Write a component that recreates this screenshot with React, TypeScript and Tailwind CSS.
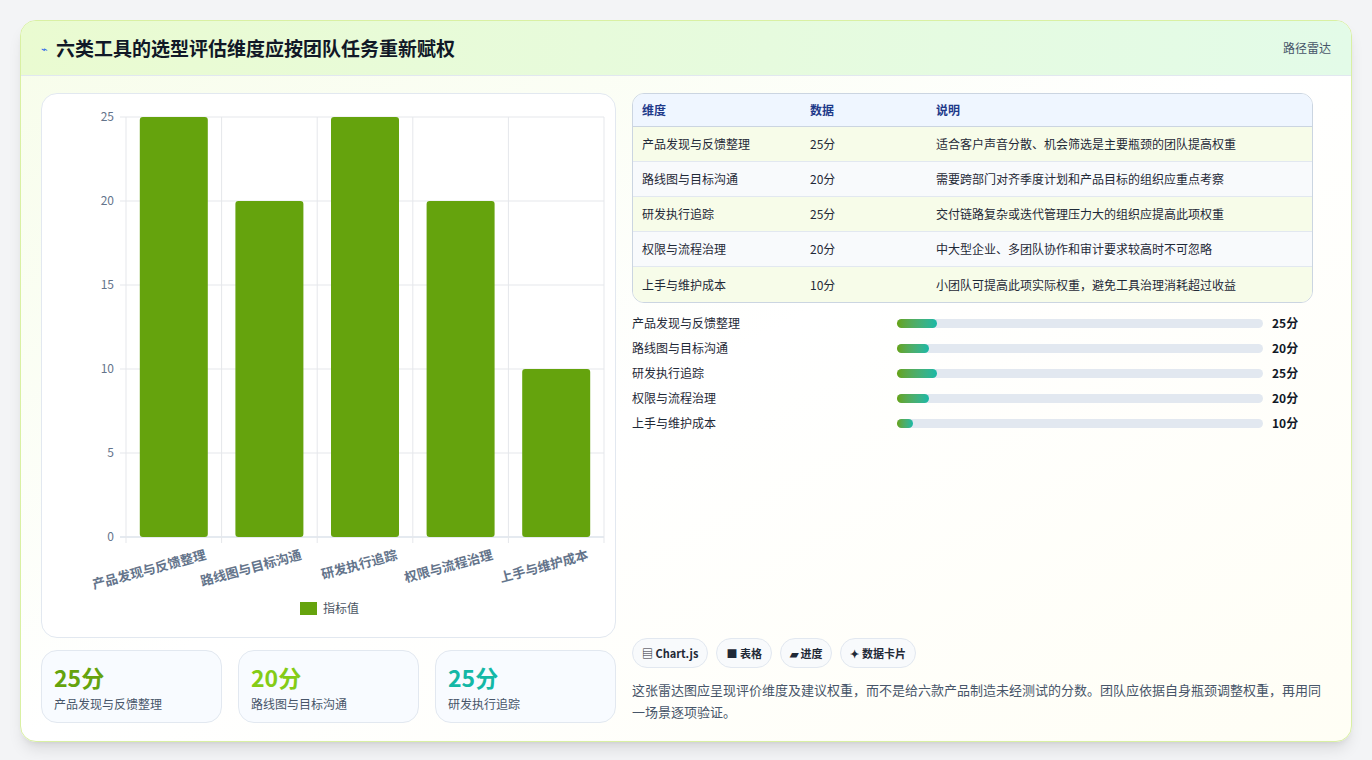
const FONT = { fontFamily: '"Noto Sans CJK SC", "Noto Sans", sans-serif' };

const rows = [
  { name: "产品发现与反馈整理", v: 25, note: "适合客户声音分散、机会筛选是主要瓶颈的团队提高权重" },
  { name: "路线图与目标沟通", v: 20, note: "需要跨部门对齐季度计划和产品目标的组织应重点考察" },
  { name: "研发执行追踪", v: 25, note: "交付链路复杂或迭代管理压力大的组织应提高此项权重" },
  { name: "权限与流程治理", v: 20, note: "中大型企业、多团队协作和审计要求较高时不可忽略" },
  { name: "上手与维护成本", v: 10, note: "小团队可提高此项实际权重，避免工具治理消耗超过收益" },
];

function BarChart() {
  const x0 = 84, x1 = 562, yTop = 23, yBot = 443;
  const step = (x1 - x0) / 5;
  return (
    <svg width="575" height="543" className="block">
      {[0, 5, 10, 15, 20, 25].map((t) => {
        const y = yBot - (t / 25) * (yBot - yTop);
        return (
          <g key={t}>
            <line x1={x0 - 6} x2={x1} y1={y} y2={y} stroke={t === 0 ? "#cbd5e1" : "#e5e7eb"} />
            <text x={x0 - 12} y={y + 4} textAnchor="end" fontSize="12" fill="#64748b">{t}</text>
          </g>
        );
      })}
      {[0, 1, 2, 3, 4, 5].map((i) => (
        <line key={i} x1={x0 + i * step} x2={x0 + i * step} y1={yTop} y2={yBot + 6} stroke="#e5e7eb" />
      ))}
      {rows.map((r, i) => {
        const h = (r.v / 25) * (yBot - yTop);
        const cx = x0 + i * step + step / 2;
        return (
          <g key={r.name}>
            <rect x={cx - 34} y={yBot - h} width="68" height={h} rx="3" fill="#65a30d" />
            <text x={cx + 33} y={yBot + 22} textAnchor="end" fontSize="13" fontWeight="600" fill="#64748b" transform={`rotate(-15 ${cx + 33} ${yBot + 22})`}>{r.name}</text>
          </g>
        );
      })}
      <rect x="258" y="508" width="17" height="13" fill="#65a30d" />
      <text x="281" y="519" fontSize="12" fill="#4b5563">指标值</text>
    </svg>
  );
}

export default function App() {
  return (
    <div style={FONT} className="min-h-[760px] bg-[#f3f4f6] p-5">
      <div className="overflow-hidden rounded-2xl border border-[#d9f0a3] bg-gradient-to-br from-[#f7fdea] via-white to-[#fffef5] shadow-lg">
        <div className="flex h-[55px] items-center justify-between border-b border-[#e2e8f0] bg-gradient-to-r from-[#eafbd1] to-[#e3fbe8] px-5">
          <div className="flex items-center gap-2">
            <span className="text-[11px] text-[#2563eb]">⌁</span>
            <h1 className="text-[19px] font-bold text-[#111827]">六类工具的选型评估维度应按团队任务重新赋权</h1>
          </div>
          <span className="text-[12px] text-[#475569]">路径雷达</span>
        </div>
        <div className="flex gap-4 px-5 pt-[17px] pb-[18px]">
          <div className="flex w-[575px] flex-col gap-3">
            <div className="rounded-2xl border border-[#e2e8f0] bg-white">
              <BarChart />
            </div>
            <div className="grid grid-cols-3 gap-4">
              {[
                ["25分", "产品发现与反馈整理", "text-[#65a30d]"],
                ["20分", "路线图与目标沟通", "text-[#84cc16]"],
                ["25分", "研发执行追踪", "text-[#14b8a6]"],
              ].map(([v, l, c]) => (
                <div key={l} className="h-[73px] rounded-2xl border border-[#e2e8f0] bg-[#f8fbff] px-3 pt-3">
                  <div className={`text-[23px] leading-7 font-bold ${c}`}>{v}</div>
                  <div className="mt-1 text-[12px] text-[#475569]">{l}</div>
                </div>
              ))}
            </div>
          </div>
          <div className="flex flex-1 flex-col">
            <div className="mr-[18px] overflow-hidden rounded-xl border border-[#cbd5e1] text-[12px]">
              <div className="grid h-[33px] grid-cols-[168px_126px_1fr] items-center border-b border-[#cbd5e1] bg-[#eff6ff] px-[9px] font-semibold text-[#1e3a8a]">
                <span>维度</span><span>数据</span><span>说明</span>
              </div>
              {rows.map((r, i) => (
                <div key={r.name} className={`grid h-[35px] grid-cols-[168px_126px_1fr] items-center px-[9px] text-[#1f2937] ${i < 4 ? "border-b border-[#e2e8f0]" : ""} ${i % 2 ? "bg-[#f8fafc]" : "bg-[#f7fce9]"}`}>
                  <span>{r.name}</span><span>{r.v}分</span><span>{r.note}</span>
                </div>
              ))}
            </div>
            <div className="mt-[12px] flex flex-col gap-[9px] text-[12px]">
              {rows.map((r) => (
                <div key={r.name} className="flex h-4 items-center">
                  <span className="w-[265px] text-[#1f2937]">{r.name}</span>
                  <div className="h-[9px] w-[366px] rounded-full bg-[#e2e8f0]">
                    <div className="h-full rounded-full bg-gradient-to-r from-[#65a30d] to-[#14b8a6]" style={{ width: (r.v / 25) * 40 }} />
                  </div>
                  <span className="ml-[9px] font-bold text-[#111827]">{r.v}分</span>
                </div>
              ))}
            </div>
            <div className="mt-auto flex gap-2 text-[11px] font-semibold text-[#1f2937]">
              {["▤ Chart.js", "■ 表格", "▰ 进度", "✦ 数据卡片"].map((t) => (
                <span key={t} className="rounded-full border border-[#e2e8f0] bg-[#f8fafc] px-[9px] py-[6px]">{t}</span>
              ))}
            </div>
            <p className="mt-[11px] text-[13px] leading-[22px] text-[#475569]">
              这张雷达图应呈现评价维度及建议权重，而不是给六款产品制造未经测试的分数。团队应依据自身瓶颈调整权重，再用同一场景逐项验证。
            </p>
          </div>
        </div>
      </div>
    </div>
  );
}
